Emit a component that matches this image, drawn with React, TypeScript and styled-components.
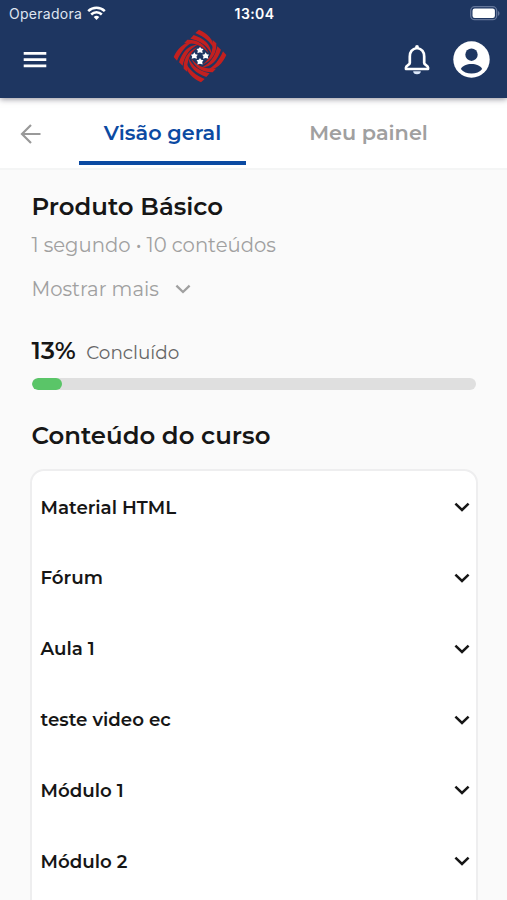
import React from "react";
import styled, { createGlobalStyle } from "styled-components";

const GlobalStyle = createGlobalStyle`
  * { box-sizing: border-box; }
  html, body { margin: 0; background: #fafafa; }
  body { font-family: Montserrat, Inter, sans-serif; color: #161616; overflow: hidden; }
  button { border: 0; padding: 0; background: none; font: inherit; color: inherit; }
  svg { display: block; flex: none; }
`;

const Screen = styled.div`
  width: 100%;
  height: 900px;
  overflow: hidden;
  display: flex;
  flex-direction: column;
`;

const TopArea = styled.header`
  height: 98px;
  flex: none;
  background: #1e3661;
  color: #fff;
  box-shadow: 0 1px 6px rgba(30, 25, 45, 0.5);
  z-index: 1;
`;

const StatusBar = styled.div`
  height: 27px;
  padding: 0 7px 0 9px;
  display: grid;
  grid-template-columns: 1fr auto 1fr;
  align-items: center;
  font-family: Inter, sans-serif;
  font-size: 14px;
  line-height: 27px;
`;

const Carrier = styled.div`
  display: flex;
  align-items: center;
  gap: 5px;
  color: #dfe5f0;
  letter-spacing: 0.28px;
`;

const Clock = styled.div`
  font-weight: 600;
  letter-spacing: 0.4px;
`;

const Power = styled.div`
  justify-self: end;
`;

const AppBar = styled.div`
  height: 71px;
  padding: 0 17px 0 23px;
  display: grid;
  grid-template-columns: 150px 54px 1fr;
  align-items: start;
`;

const MenuButton = styled.button`
  margin-top: 24px;
  width: 24px;
`;

const LogoLink = styled.div`
  margin-top: 2px;
`;

const Actions = styled.div`
  margin-top: 14px;
  display: flex;
  align-items: center;
  justify-content: flex-end;
  gap: 22px;
`;

const TabBar = styled.nav`
  height: 72px;
  flex: none;
  padding-left: 20px;
  background: #fff;
  border-bottom: 2px solid #f4f5f5;
  display: flex;
`;

const BackButton = styled.button`
  width: 59px;
  padding-top: 2px;
`;

const Tab = styled.button<{ $active?: boolean; $width: number }>`
  width: ${(p) => p.$width}px;
  height: 67px;
  margin-right: 40px;
  padding-top: 5px;
  border-bottom: 4px solid ${(p) => (p.$active ? "#0b4aa2" : "transparent")};
  color: ${(p) => (p.$active ? "#0b4aa2" : "#a0a0a0")};
  font-size: 20.8px;
  font-weight: 600;
  white-space: nowrap;
`;

const Content = styled.main`
  flex: 1;
  padding: 19px 31px 0 31.5px;
  overflow: hidden;
`;

const Heading = styled.h1`
  margin: 0;
  font-size: 24.4px;
  line-height: 34px;
  font-weight: 600;
`;

const Meta = styled.p`
  margin: 6px 0 0;
  font-size: 19.6px;
  line-height: 32px;
  font-weight: 400;
  color: #a0a0a0;
`;

const ShowMore = styled.button`
  margin-top: 12px;
  height: 32px;
  display: flex;
  align-items: center;
  gap: 16.5px;
  color: #a0a0a0;
  font-size: 19.6px;
  font-weight: 400;
`;

const ProgressLabel = styled.div`
  margin-top: 29px;
  height: 34px;
  display: flex;
  align-items: baseline;
  gap: 10.5px;
`;

const Percent = styled.strong`
  font-size: 24.4px;
  line-height: 32px;
  font-weight: 600;
`;

const Done = styled.span`
  font-size: 18.4px;
  line-height: 30px;
  font-weight: 400;
  color: #666;
`;

const Track = styled.div`
  margin: 10px 0 28px;
  height: 12px;
  border-radius: 6px;
  background: #dfdfdf;
  overflow: hidden;
`;

const Fill = styled.div`
  width: 30px;
  height: 100%;
  border-radius: 6px;
  background: #5ac568;
`;

const ModuleList = styled.section`
  margin: 17px -2px 0 -1.5px;
  height: 460px;
  padding: 0.6px 6px 0 8.5px;
  background: #fff;
  border: 2px solid #eeeeef;
  border-radius: 14px;
`;

const ModuleRow = styled.div`
  height: 70.85px;
  display: flex;
  align-items: center;
  justify-content: space-between;
  font-size: 18.25px;
  font-weight: 600;
`;

const modules = ["Material HTML", "Fórum", "Aula 1", "teste video ec", "Módulo 1", "Módulo 2"];

const Chevron = ({ width = 2.5 }: { width?: number }) => (
  <svg width="16" height="16" viewBox="0 0 16 16" fill="none" stroke="currentColor" strokeWidth={width}>
    <path d="M1.4 4.6 8 11l6.6-6.4" />
  </svg>
);

const Wifi = () => (
  <svg width="19" height="15" viewBox="0 0 19 15" fill="none" stroke="#fff" strokeWidth="2.5">
    <path d="M1.2 5.2a12 12 0 0 1 16.6 0M4.2 8.5a7.5 7.5 0 0 1 10.6 0" />
    <path d="m9.5 14-2.8-2.9a4 4 0 0 1 5.6 0z" fill="#fff" stroke="none" />
  </svg>
);

const Battery = () => (
  <svg width="30" height="15" viewBox="0 0 30 15">
    <rect x=".7" y=".7" width="26" height="13" rx="4" fill="none" stroke="#64769a" strokeWidth="1.3" />
    <rect x="2.5" y="2.5" width="22.4" height="9.4" rx="2.2" fill="#fff" />
    <path d="M28 5c2 .8 2 4 0 4.8z" fill="#64769a" />
  </svg>
);

const Logo = () => (
  <svg width="54" height="54" viewBox="-81 -81 162 162">
    {[0, 90, 180, 270].map((angle) => (
      <g key={angle} transform={`rotate(${angle})`} fill="#c3201f">
        <path d="M-14-69-3-79C22-68 42-50 43-19 32-43 12-58-14-69Z" />
        <path d="M-29-52-19-63C12-52 32-37 35-4 22-31 3-45-29-52Z" />
        <path d="M-48-38-38-49C-10-50 13-39 27-7 8-31-14-40-48-38Z" />
      </g>
    ))}
    {[0, 90, 180, 270].map((angle) => (
      <path
        key={angle}
        transform={`rotate(${angle}) translate(0 -17) rotate(${-angle})`}
        d="m0-11 3.500 5.500 7 1.500-4 5 1.500 7.500L0 6l-8 2.500L-6.500 1l-4-5 7-1.500z"
        fill="#fff"
      />
    ))}
  </svg>
);

const Bell = () => (
  <svg width="28" height="32" viewBox="0 0 28 32">
    <path
      d="M14 4c-5 .9-7.2 4.300-7.200 8.500v6.500c0 2-3.800 2.200-3.800 4.500v1.500h22v-1.500c0-2.300-3.800-2.500-3.800-4.500v-6.500C21.200 8.300 19 4.900 14 4Z"
      fill="none"
      stroke="#fff"
      strokeWidth="2.7"
      strokeLinejoin="round"
    />
    <circle cx="14" cy="3" r="1.9" fill="#fff" />
    <path d="M10.2 27.200h7.600a3.800 3 0 0 1-7.600 0z" fill="#dce8fa" />
  </svg>
);

const Avatar = () => (
  <svg width="37" height="37" viewBox="0 0 37 37">
    <circle cx="18.5" cy="18.5" r="18.2" fill="#fff" />
    <circle cx="18.5" cy="13.7" r="6.2" fill="#1e3661" />
    <path d="M7.800 28c1.800-3.500 6-5 10.700-5s8.900 1.500 10.700 5c-2.500 3-6.200 4.500-10.700 4.500S10.300 31 7.800 28Z" fill="#1e3661" />
  </svg>
);

export default function App() {
  return (
    <>
      <GlobalStyle />
      <Screen>
        <TopArea>
          <StatusBar>
            <Carrier>Operadora <Wifi /></Carrier>
            <Clock>13:04</Clock>
            <Power><Battery /></Power>
          </StatusBar>
          <AppBar>
            <MenuButton aria-label="Menu">
              <svg width="24" height="17" viewBox="0 0 24 17" stroke="#fff" strokeWidth="2.7">
                <path d="M.7 2.300h22.600M.7 8.600h22.600M.7 14.900h22.600" />
              </svg>
            </MenuButton>
            <LogoLink><Logo /></LogoLink>
            <Actions><Bell /><Avatar /></Actions>
          </AppBar>
        </TopArea>
        <TabBar>
          <BackButton aria-label="Voltar">
            <svg width="22" height="22" viewBox="0 0 22 22" fill="none" stroke="#999" strokeWidth="2.2">
              <path d="M20.500 11H2.500M11 2 2 11l9 9" />
            </svg>
          </BackButton>
          <Tab $active $width={167}>Visão geral</Tab>
          <Tab $width={165}>Meu painel</Tab>
        </TabBar>
        <Content>
          <Heading>Produto Básico</Heading>
          <Meta>1 segundo • 10 conteúdos</Meta>
          <ShowMore>Mostrar mais <Chevron width={2.3} /></ShowMore>
          <ProgressLabel>
            <Percent>13%</Percent>
            <Done>Concluído</Done>
          </ProgressLabel>
          <Track><Fill /></Track>
          <Heading as="h2">Conteúdo do curso</Heading>
          <ModuleList>
            {modules.map((title) => (
              <ModuleRow key={title}>
                {title}
                <Chevron />
              </ModuleRow>
            ))}
          </ModuleList>
        </Content>
      </Screen>
    </>
  );
}
